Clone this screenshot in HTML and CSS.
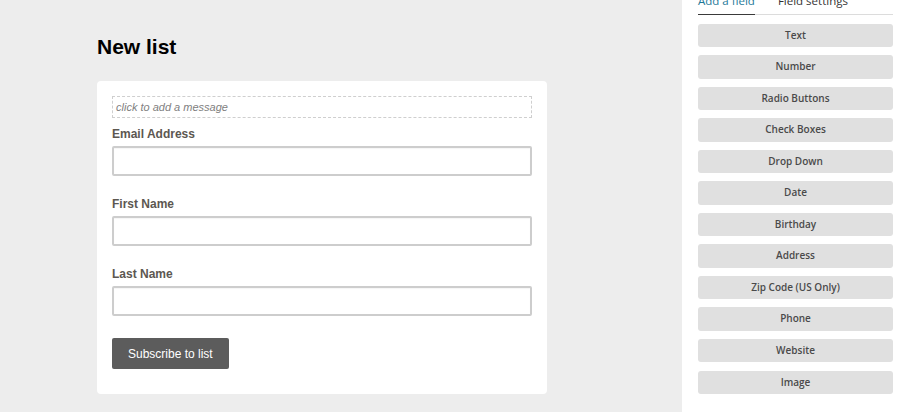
FILE: index.html
```html
<!DOCTYPE html>
<html>
<head>
<meta charset="utf-8">
<link rel="stylesheet" href="styles.css">
</head>
<body>
<main class="main">
  <h1 class="title">New list</h1>
  <div class="card">
    <div class="message">click to add a message</div>
    <div class="field">
      <label class="label">Email Address</label>
      <div class="input"></div>
    </div>
    <div class="field">
      <label class="label">First Name</label>
      <div class="input"></div>
    </div>
    <div class="field">
      <label class="label">Last Name</label>
      <div class="input"></div>
    </div>
    <button class="submit">Subscribe to list</button>
  </div>
</main>
<aside class="sidebar">
  <div class="tabs">
    <span class="tab active">Add a field</span>
    <span class="tab">Field settings</span>
  </div>
  <div class="fieldlist">
    <div class="fbtn">Text</div>
    <div class="fbtn">Number</div>
    <div class="fbtn">Radio Buttons</div>
    <div class="fbtn">Check Boxes</div>
    <div class="fbtn">Drop Down</div>
    <div class="fbtn">Date</div>
    <div class="fbtn">Birthday</div>
    <div class="fbtn">Address</div>
    <div class="fbtn">Zip Code (US Only)</div>
    <div class="fbtn">Phone</div>
    <div class="fbtn">Website</div>
    <div class="fbtn">Image</div>
  </div>
</aside>
</body>
</html>
```

FILE: styles.css
```css
html, body {
  margin: 0;
  padding: 0;
  height: 412px;
  overflow: hidden;
}
body {
  display: flex;
  font-family: "Liberation Sans", Arial, sans-serif;
}
.main {
  width: 682px;
  flex: none;
  background: #ededed;
  padding: 34px 0 0 97px;
  box-sizing: border-box;
}
.title {
  margin: 0 0 22px 0;
  font-size: 21px;
  line-height: 25px;
  font-weight: bold;
  color: #000;
}
.card {
  width: 450px;
  box-sizing: border-box;
  background: #fff;
  border-radius: 4px;
  padding: 15px 15px 25px 15px;
}
.message {
  height: 22px;
  box-sizing: border-box;
  border: 1px dashed #cfcfcf;
  font-style: italic;
  font-size: 11px;
  line-height: 20px;
  color: #808080;
  padding-left: 3px;
  margin-bottom: 8px;
}
.field {
  margin-bottom: 20px;
}
.label {
  display: block;
  font-size: 12px;
  line-height: 16px;
  font-weight: bold;
  color: #5c5751;
  margin-bottom: 4px;
}
.input {
  height: 30px;
  box-sizing: border-box;
  border: 2px solid #cdcdcd;
  border-radius: 2px;
  background: #fff;
  box-shadow: inset 0 1px 1px rgba(0,0,0,0.04);
}
.submit {
  display: block;
  margin-top: 22px;
  height: 31px;
  padding: 0 16px;
  border: none;
  border-radius: 2px;
  background: #5c5c5c;
  color: #fff;
  font-family: "Liberation Sans", Arial, sans-serif;
  font-size: 12px;
}
.sidebar {
  flex: 1;
  background: #fff;
  padding: 0 29px 0 16px;
  font-family: "Open Sans", sans-serif;
}
.tabs {
  display: flex;
  gap: 23px;
  margin-top: -7px;
  border-bottom: 1px solid #dcdcdc;
}
.tab {
  font-size: 11.5px;
  line-height: 16px;
  padding-bottom: 5px;
  color: #333;
  margin-bottom: -1px;
  border-bottom: 1px solid transparent;
}
.tab.active {
  color: #1e7898;
  border-bottom-color: #3a3a3a;
}
.fieldlist {
  display: flex;
  flex-direction: column;
  gap: 8.05px;
  margin-top: 8.5px;
}
.fbtn {
  height: 23.5px;
  line-height: 23.5px;
  background: #e0e0e0;
  border-radius: 3px;
  text-align: center;
  font-size: 10px;
  font-weight: 600;
  color: #4a4a4a;
}
```
